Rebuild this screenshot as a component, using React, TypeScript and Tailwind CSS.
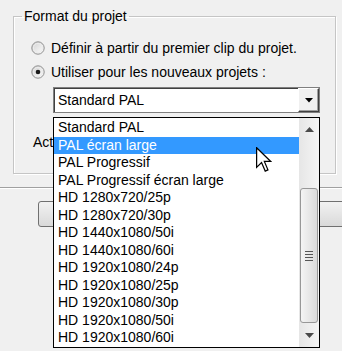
import React from "react";

const items = [
  "Standard PAL",
  "PAL écran large",
  "PAL Progressif",
  "PAL Progressif écran large",
  "HD 1280x720/25p",
  "HD 1280x720/30p",
  "HD 1440x1080/50i",
  "HD 1440x1080/60i",
  "HD 1920x1080/24p",
  "HD 1920x1080/25p",
  "HD 1920x1080/30p",
  "HD 1920x1080/50i",
  "HD 1920x1080/60i",
];

function Radio({ checked }: { checked: boolean }) {
  const id = checked ? "rg1" : "rg0";
  return (
    <svg width="14" height="14" viewBox="0 0 14 14" className="shrink-0">
      <defs>
        <linearGradient id={id} x1="0" y1="0" x2="1" y2="1">
          <stop offset="0" stopColor="#d0d0d0" />
          <stop offset="1" stopColor="#ffffff" />
        </linearGradient>
      </defs>
      <circle cx="7" cy="7" r="6.2" fill={`url(#${id})`} stroke="#8f8f8f" strokeWidth="1" />
      <circle cx="7" cy="7" r="4.6" fill="none" stroke="#ececec" strokeWidth="1" />
      {checked && <circle cx="7" cy="7" r="2.3" fill="#1a1a1a" />}
    </svg>
  );
}

function Cursor() {
  return (
    <svg width="16" height="26" viewBox="0 0 13 21" className="block">
      <path
        d="M0.5 0.5 L0.5 16.5 L4.5 12.5 L7.5 19.5 L9.7 18.5 L6.8 11.7 L12 11.7 Z"
        fill="#ffffff"
        stroke="#000000"
        strokeWidth="1"
        strokeLinejoin="miter"
      />
    </svg>
  );
}

export default function App() {
  return (
    <div className="relative w-[342px] h-[351px] overflow-hidden bg-[#f0f0f0] font-['Liberation_Sans',Arial,sans-serif] text-[14px] text-black">
      <div className="pt-[8px]">
        <fieldset className="ml-[13px] w-[323px] h-[166px] border border-[#c5c5c5] shadow-[inset_1px_1px_0_#ffffff,1px_1px_0_#ffffff]">
          <legend className="ml-[8px] px-[2px] leading-[16px]">Format du projet</legend>
          <div className="pl-[17px] pt-[12px] flex flex-col">
            <div className="flex items-center h-[24px] gap-[6px]">
              <Radio checked={false} />
              <span>Définir à partir du premier clip du projet.</span>
            </div>
            <div className="flex items-center h-[24px] gap-[6px]">
              <Radio checked={true} />
              <span>Utiliser pour les nouveaux projets :</span>
            </div>
            <div className="ml-[22px] mt-[3px] w-[267px] h-[26px] flex bg-white border border-[#7f7f7f] shadow-[inset_1px_1px_0_#404040]">
              <span className="flex-1 pl-[4px] flex items-center">Standard PAL</span>
              <div className="w-[21px] h-full flex items-center justify-center bg-[#f0f0f0] border-t border-l border-t-white border-l-white border-b border-r border-b-[#404040] border-r-[#404040] shadow-[inset_-1px_-1px_0_#a0a0a0]">
                <svg width="8" height="5" viewBox="0 0 8 5">
                  <path d="M0 0 L8 0 L4 4.5 Z" fill="#000" />
                </svg>
              </div>
            </div>
            <div className="ml-[2px] mt-[19px] h-[20px] flex items-center">Act</div>
          </div>
        </fieldset>
        <div className="mt-[13px] h-[1px] bg-[#a0a0a0]" />
        <div className="h-[1px] bg-white" />
        <div className="mt-[12px] flex justify-between pl-[38px]">
          <div className="w-[90px] h-[26px] rounded-[3px] border border-[#707070] bg-gradient-to-b from-[#f2f2f2] to-[#d9d9d9]" />
          <div className="w-[90px] h-[26px] rounded-[3px] border border-[#707070] bg-gradient-to-b from-[#f2f2f2] to-[#d9d9d9] -mr-[60px]" />
        </div>
      </div>

      {/* Dropdown list overlay */}
      <div className="absolute left-[53px] top-[117px] w-[267px] h-[231px] bg-white border border-black flex">
        <div className="flex-1 flex flex-col pt-[1px]">
          {items.map((it, i) => (
            <div
              key={it}
              className={
                i === 1
                  ? "h-[17.5px] leading-[17.5px] pl-[4px] bg-[#3399ff] text-white whitespace-nowrap"
                  : "h-[17.5px] leading-[17.5px] pl-[4px] whitespace-nowrap"
              }
            >
              {it}
            </div>
          ))}
        </div>
        <div className="w-[20px] h-full flex flex-col bg-gradient-to-r from-[#e6e6e6] to-[#f5f5f5]">
          <div className="h-[22px] flex items-center justify-center">
            <svg width="9" height="5" viewBox="0 0 9 5">
              <path d="M0 5 L4.5 0 L9 5 Z" fill="#4a4a4a" />
            </svg>
          </div>
          <div className="mt-[48px] h-[135px] mx-[1px] rounded-[3px] border border-[#979797] bg-gradient-to-r from-[#f4f4f4] to-[#dadada] flex items-center justify-center">
            <div className="flex flex-col gap-[2px]">
              <div className="w-[8px] h-[1px] bg-[#555]" />
              <div className="w-[8px] h-[1px] bg-[#555]" />
              <div className="w-[8px] h-[1px] bg-[#555]" />
              <div className="w-[8px] h-[1px] bg-[#555]" />
            </div>
          </div>
          <div className="flex-1 flex items-center justify-center">
            <svg width="9" height="5" viewBox="0 0 9 5">
              <path d="M0 0 L9 0 L4.5 5 Z" fill="#4a4a4a" />
            </svg>
          </div>
        </div>
      </div>

      {/* Mouse cursor */}
      <div className="absolute left-[256px] top-[147px]">
        <Cursor />
      </div>
    </div>
  );
}
